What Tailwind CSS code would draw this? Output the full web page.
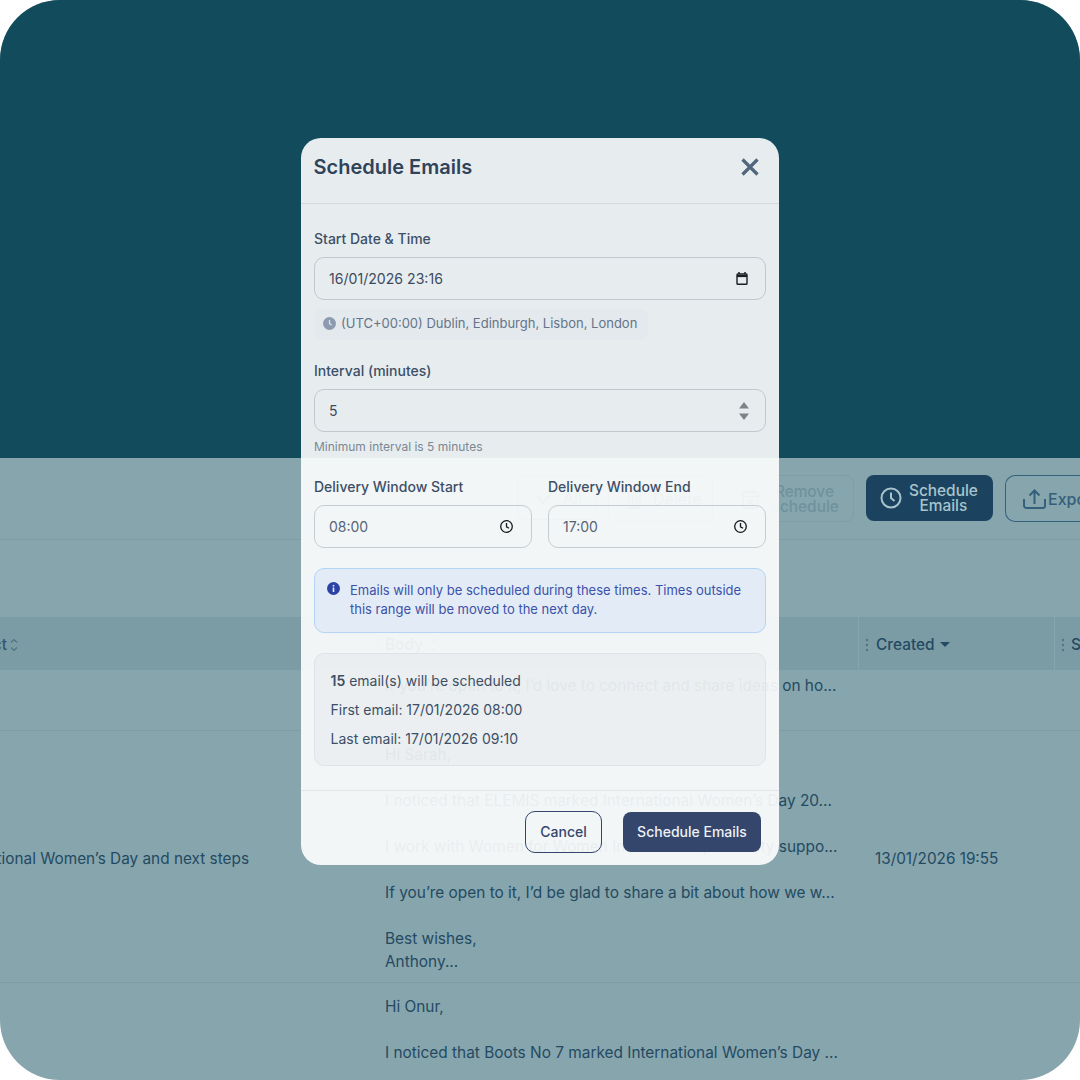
<!DOCTYPE html>
<html lang="en">
<head>
    <meta charset="UTF-8">
    <title>Schedule Emails</title>
    <script src="https://cdn.jsdelivr.net/npm/@tailwindcss/browser@4"></script>
</head>
<body class="bg-white font-['Inter',sans-serif]">
    <div class="relative w-[1080px] h-[1080px] overflow-hidden rounded-[60px] bg-[#87a5ad] text-[#234a62]">
        <!-- Hero -->
        <div class="h-[458px] bg-[#114b5c]"></div>

        <!-- Toolbar -->
        <div class="flex h-[82px] items-start justify-end pt-[17px] whitespace-nowrap border-b border-[#7d9ca5]">
            <div class="flex h-[45px] w-[80px] items-center gap-[9px] rounded-lg border border-[#5f8591] pl-[18px] text-[#4f7583]">
                <svg class="h-[18px] w-[18px]" viewBox="0 0 18 18" fill="none" stroke="currentColor" stroke-width="2"><path d="M1 7l6 7L17 3"/></svg>
                <span class="text-base">All</span>
            </div>
            <div class="ml-[11px] flex h-[47px] w-[105px] items-center gap-[11px] rounded-lg border border-[#5f8591] pl-[18px] text-[#4f7583]">
                <svg class="h-[20px] w-[15px]" viewBox="0 0 15 20" fill="none" stroke="currentColor" stroke-width="1.4"><path d="M0 3h15M5 3V1h5v2M1.500 3l1 16h10l1-16M5.500 6v10M9.500 6v10"/></svg>
                <span class="text-base">Delete</span>
            </div>
            <div class="ml-3 flex h-[47px] w-[129px] items-center gap-[11px] rounded-lg border border-[#7f9ea7] pl-4 text-[#6f929c]">
                <svg class="h-[20px] w-[17px] shrink-0 text-[#4f7583]" viewBox="0 0 17 20" fill="none" stroke="currentColor" stroke-width="1.400"><rect x="1" y="3" width="15" height="16" rx="2"/><path d="M1 7.500h15M5 0.500v4M12 0.500v4M6 11l5 5M11 11l-5 5"/></svg>
                <span class="text-center text-[15.400px] leading-[15px] font-medium">Remove<br>Schedule</span>
            </div>
            <div class="ml-3 flex h-[46px] w-[127px] items-center gap-[7px] rounded-lg bg-[#1b435f] pl-[14px] text-[#a9c3cb]">
                <svg class="h-[22px] w-[22px] shrink-0" viewBox="0 0 22 22" fill="none" stroke="currentColor" stroke-width="2"><circle cx="11" cy="11" r="9.500"/><path d="M11 5.500V11l3.500 3"/></svg>
                <span class="text-center text-[15.400px] leading-[15px] font-medium">Schedule<br>Emails</span>
            </div>
            <div class="ml-3 flex h-[47px] w-[75px] items-center gap-[2px] overflow-hidden rounded-l-[10px] border-y-[1.500px] border-l-[1.500px] border-[#33607a] pl-[17px] text-[#33607a]">
                <svg class="h-[20px] w-[23px] shrink-0" viewBox="0 0 23 20" fill="none" stroke="currentColor" stroke-width="2"><path d="M11.500 15V1.500M6.500 6.500l5-5 5 5M1 10v6.500a2.500 2.500 0 0 0 2.500 2.500h16a2.500 2.500 0 0 0 2.500-2.500V10"/></svg>
                <span class="text-base font-medium">Export</span>
            </div>
        </div>

        <!-- Table -->
        <div class="mt-[77px] grid grid-cols-[370px_488px_196px_26px] text-[15.400px] leading-[23px]">
            <div class="flex h-[53px] items-center justify-end gap-[3px] overflow-hidden bg-[#7b9ca5] pt-[2px] pr-[352px]">
                <span class="font-medium text-[#34586b]">Subject</span>
                <svg class="h-[14px] w-[8px] shrink-0 text-[#4f7280]" viewBox="0 0 8 14" fill="none" stroke="currentColor" stroke-width="1.100"><path d="M1 4.500L4 1.500l3 3M1 9.500l3 3 3-3"/></svg>
            </div>
            <div class="flex h-[53px] items-center bg-[#7b9ca5] pt-[2px] pl-[5px]">
                <svg class="h-[14px] w-[4px] text-[#648891]" viewBox="0 0 4 14" fill="currentColor"><circle cx="2" cy="2" r="1.200"/><circle cx="2" cy="7" r="1.200"/><circle cx="2" cy="12" r="1.200"/></svg>
                <span class="ml-[6px] font-medium text-[#34586b]">Body</span>
                <svg class="ml-[7px] h-[14px] w-[8px] text-[#4f7280]" viewBox="0 0 8 14" fill="none" stroke="currentColor" stroke-width="1.100"><path d="M1 4.500L4 1.500l3 3M1 9.500l3 3 3-3"/></svg>
            </div>
            <div class="flex h-[53px] items-center border-l border-[#86a5ad] bg-[#7b9ca5] pt-[2px] pl-[6px]">
                <svg class="h-[14px] w-[4px] text-[#517582]" viewBox="0 0 4 14" fill="currentColor"><circle cx="2" cy="2" r="1.200"/><circle cx="2" cy="7" r="1.200"/><circle cx="2" cy="12" r="1.200"/></svg>
                <span class="ml-[7px] font-medium text-[#234a62]">Created</span>
                <svg class="ml-[5px] h-[5px] w-[10px] text-[#234a62]" viewBox="0 0 10 5" fill="currentColor"><path d="M0 0h10L5 5z"/></svg>
            </div>
            <div class="flex h-[53px] items-center overflow-hidden border-l border-[#86a5ad] bg-[#7b9ca5] pt-[2px] pl-[6px]">
                <svg class="h-[14px] w-[4px] shrink-0 text-[#517582]" viewBox="0 0 4 14" fill="currentColor"><circle cx="2" cy="2" r="1.200"/><circle cx="2" cy="7" r="1.200"/><circle cx="2" cy="12" r="1.200"/></svg>
                <span class="ml-[6px] font-medium text-[#234a62]">Status</span>
            </div>

            <!-- Row 1 -->
            <div class="col-span-4 grid h-[61px] grid-cols-subgrid border-b border-[#7d9ca5]">
                <div></div>
                <div class="pt-[4px] pl-[15px] whitespace-nowrap">If you’re open to it, I’d love to connect and share ideas on ho...</div>
            </div>

            <!-- Row 2 -->
            <div class="col-span-4 grid h-[252px] grid-cols-subgrid border-b border-[#7d9ca5]">
                <div class="flex items-center justify-end overflow-hidden pt-[4px] pr-[121px] text-[15.350px] whitespace-nowrap">
                    <span>International Women’s Day and next steps</span>
                </div>
                <div class="pt-[12px] pl-[15px] whitespace-nowrap">
                    <p>Hi Sarah,</p>
                    <p class="mt-[23px]">I noticed that ELEMIS marked International Women’s Day 20...</p>
                    <p class="mt-[23px]">I work with Women for Women International, a charity suppo...</p>
                    <p class="mt-[23px]">If you’re open to it, I’d be glad to share a bit about how we w...</p>
                    <p class="mt-[23px]">Best wishes,</p>
                    <p>Anthony...</p>
                </div>
                <div class="flex items-center pt-[4px] pl-[17px] text-[15.300px] whitespace-nowrap">13/01/2026 19:55</div>
            </div>

            <!-- Row 3 -->
            <div class="col-span-4 grid grid-cols-subgrid">
                <div></div>
                <div class="pt-[12px] pl-[15px] whitespace-nowrap">
                    <p>Hi Onur,</p>
                    <p class="mt-[23px]">I noticed that Boots No 7 marked International Women’s Day ...</p>
                </div>
            </div>
        </div>

        <!-- Modal -->
        <div class="absolute top-[138px] left-[301px] flex h-[727px] w-[478px] flex-col rounded-[20px] bg-white/90">
            <div class="flex h-[66px] shrink-0 items-center justify-between border-b border-[#d3dadd] pr-[18.500px] pb-[8px] pl-[12.500px]">
                <h2 class="text-[20px] font-semibold text-[#2f435a]">Schedule Emails</h2>
                <svg class="h-[22px] w-[22px] text-[#52667d]" viewBox="0 0 22 22" fill="none" stroke="currentColor" stroke-width="3.200"><path d="M3.500 3.500l15 15M18.500 3.500l-15 15"/></svg>
            </div>

            <div class="flex-1 px-[13px] pt-[25px]">
                <label class="block text-sm leading-5 font-medium text-[#3d4f66]">Start Date &amp; Time</label>
                <div class="mt-2 flex h-[43px] items-center justify-between rounded-[10px] border border-[#c0c8cd] pr-[17px] pl-[14px] text-[14.100px] text-[#3d4a5e]">
                    <span>16/01/2026 23:16</span>
                    <svg class="h-[13px] w-[12px] text-[#1a1f24]" viewBox="0 0 12 13" fill="none" stroke="currentColor"><path d="M3 0v2M9 0v2" stroke-width="1.500"/><rect x="1" y="2" width="10" height="10.300" rx="0.800" stroke-width="1.400"/><path d="M1 4h10" stroke-width="2.200"/></svg>
                </div>
                <div class="mt-[9px] flex h-[31px] w-[334px] items-center gap-[5px] rounded-lg bg-[#e3e9ec] pb-[2px] pl-[9px] text-[13px] text-[#64748b]">
                    <svg class="h-[13px] w-[13px] text-[#8c9bae]" viewBox="0 0 13 13"><circle cx="6.500" cy="6.500" r="6.500" fill="currentColor"/><path d="M6.500 3v3.700l2.300 1.400" fill="none" stroke="#e3e9ec" stroke-width="1.200"/></svg>
                    <span>(UTC+00:00) Dublin, Edinburgh, Lisbon, London</span>
                </div>

                <label class="mt-[21px] block text-sm leading-5 font-medium text-[#3d4f66]">Interval (minutes)</label>
                <div class="mt-2 flex h-[43px] items-center justify-between rounded-[10px] border border-[#c0c8cd] pr-[16px] pl-[14px] text-sm text-[#3d4a5e]">
                    <span>5</span>
                    <svg class="h-[18px] w-[10px] text-[#7c8489]" viewBox="0 0 10 18" fill="currentColor"><path d="M5 0l5 6.500H0zM0 11.500h10L5 18z"/></svg>
                </div>
                <p class="mt-[7px] text-xs leading-4 text-[#7a8794]">Minimum interval is 5 minutes</p>

                <div class="mt-[22px] grid grid-cols-2 gap-4">
                    <div>
                        <label class="block text-sm leading-5 font-medium text-[#3d4f66]">Delivery Window Start</label>
                        <div class="mt-2 flex h-[43px] items-center justify-between rounded-[10px] border border-[#c6cdd2] pr-[18px] pl-[14px] text-sm text-[#566478]">
                            <span>08:00</span>
                            <svg class="h-[13px] w-[13px] text-[#14181c]" viewBox="0 0 13 13" fill="none" stroke="currentColor" stroke-width="1.300"><circle cx="6.500" cy="6.500" r="5.800"/><path d="M6.500 3v3.800l2.600 1.500"/></svg>
                        </div>
                    </div>
                    <div>
                        <label class="block text-sm leading-5 font-medium text-[#3d4f66]">Delivery Window End</label>
                        <div class="mt-2 flex h-[43px] items-center justify-between rounded-[10px] border border-[#c6cdd2] pr-[18px] pl-[14px] text-sm text-[#566478]">
                            <span>17:00</span>
                            <svg class="h-[13px] w-[13px] text-[#14181c]" viewBox="0 0 13 13" fill="none" stroke="currentColor" stroke-width="1.300"><circle cx="6.500" cy="6.500" r="5.800"/><path d="M6.500 3v3.800l2.600 1.500"/></svg>
                        </div>
                    </div>
                </div>

                <div class="mt-5 flex h-[65px] gap-[10px] rounded-[10px] border border-[#b4d4f5] bg-[#e3ecf6] pt-[12px] pl-[12px] text-[13px] leading-[19px] text-[#3b51ab]">
                    <svg class="mt-[1px] h-[13px] w-[13px] shrink-0 text-[#2c43a6]" viewBox="0 0 13 13"><circle cx="6.500" cy="6.500" r="6.500" fill="currentColor"/><rect x="5.700" y="5.500" width="1.600" height="4.500" fill="#e3ecf6"/><rect x="5.700" y="2.900" width="1.600" height="1.600" fill="#e3ecf6"/></svg>
                    <p>Emails will only be scheduled during these times. Times outside<br>this range will be moved to the next day.</p>
                </div>

                <div class="mt-5 h-[113px] rounded-[10px] border border-[#dde3e7] bg-slate-500/5 pt-[12px] pl-[15.500px] text-sm leading-[29px] text-[#3d4f66]">
                    <p><span class="font-semibold">15</span> email(s) will be scheduled</p>
                    <p>First email: 17/01/2026 08:00</p>
                    <p>Last email: 17/01/2026 09:10</p>
                </div>
            </div>

            <div class="flex h-[75px] shrink-0 items-start justify-end gap-[21px] border-t border-[#e1e6e9] pt-[20px] pr-[18px]">
                <button class="h-[42px] w-[77px] rounded-[10px] border border-[#33466b] text-sm font-medium text-[#33466b]">Cancel</button>
                <button class="mt-px h-[40px] w-[138px] rounded-lg bg-[#34466c] text-sm font-medium text-[#eef1f5]">Schedule Emails</button>
            </div>
        </div>
    </div>
</body>
</html>
